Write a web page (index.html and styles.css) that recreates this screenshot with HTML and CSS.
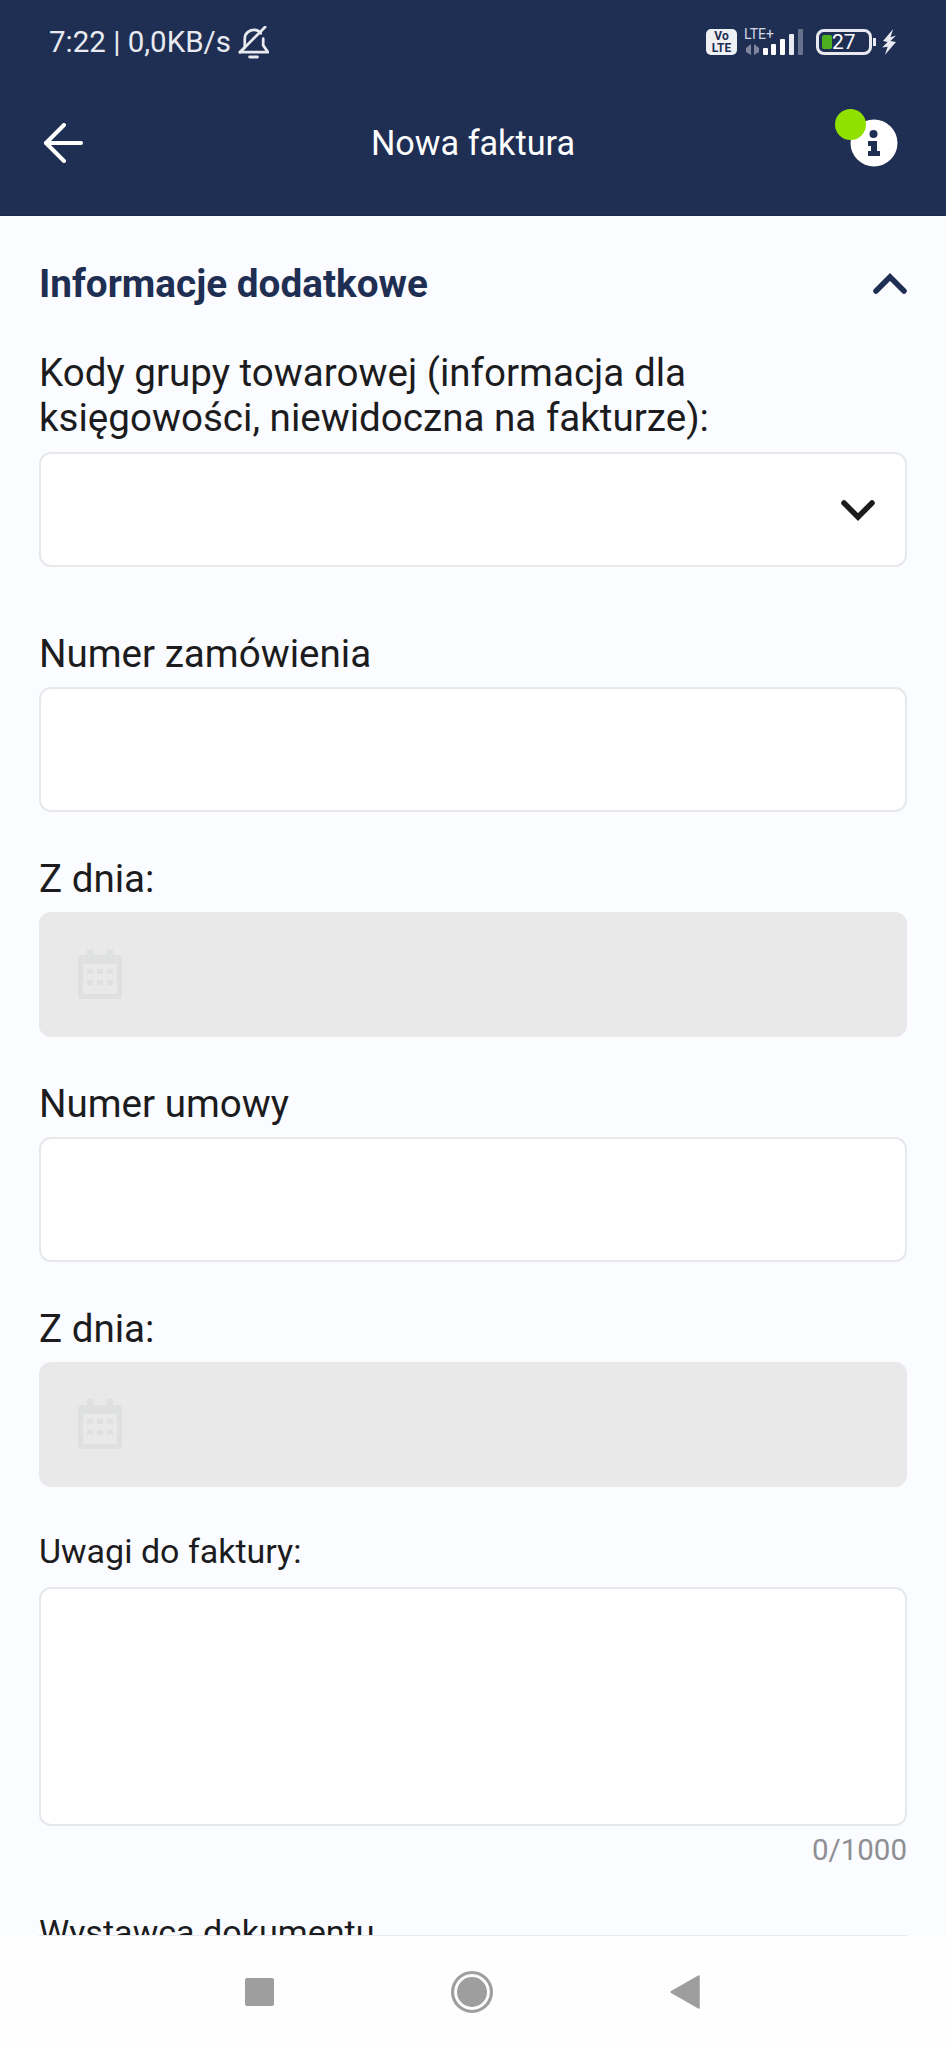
FILE: index.html
```html
<!DOCTYPE html>
<html lang="pl">
<head>
<meta charset="utf-8" />
<link rel="stylesheet" href="styles.css">
</head>

<body>
    <div class="screen">
        <header class="top">
            <div class="status">
                <div class="status-left">
                    <span>7:22 | 0,0KB/s</span>
                    <svg class="bell" viewBox="0 0 32 34" width="31" height="33" fill="none" stroke="#e8eaf0" stroke-width="2.800" stroke-linejoin="round" stroke-linecap="round">
                        <path d="M7 22 V13 C7 7 12 4 17 4 C20 4 22 5.500 23.500 7.500"/>
                        <path d="M26 13 V20 L31 27 H2 L7 22"/>
                        <path d="M2 27 L28 1"/>
                        <path d="M12 32 H20" stroke-width="3"/>
                    </svg>
                </div>
                <div class="status-right">
                    <div class="volte"><span>Vo</span><span>LTE</span></div>
                    <div class="signal">
                        <span class="lte">LTE+</span>
                        <svg viewBox="0 0 60 28" width="60" height="28" fill="#fff">
                            <path d="M2 20 L7 16 V27 L2 24 Z M10 16 L15 20 V24 L10 27 Z" fill="#7d869c"/>
                            <rect x="19" y="20" width="5" height="7" rx="1"/>
                            <rect x="27" y="16" width="5" height="11" rx="1"/>
                            <rect x="36" y="11" width="5" height="16" rx="1"/>
                            <rect x="45" y="6" width="5" height="21" rx="1" fill="#e8eaf0"/>
                            <rect x="54" y="1" width="5" height="26" rx="1" fill="#69728c"/>
                        </svg>
                    </div>
                    <div class="battery">
                        <div class="battery-body">
                            <span class="battery-fill"></span>
                            <span class="battery-num">27</span>
                        </div>
                        <span class="battery-tip"></span>
                    </div>
                    <svg class="bolt" viewBox="0 0 16 28" width="15" height="26" fill="#e8eaf0">
                        <path d="M12 0 L1 13 L6 14 L0 20 L6 19 L3 28 L15 14 L9 13 L15 7 L9 9 Z"/>
                    </svg>
                </div>
            </div>
            <div class="appbar">
                <svg class="back" viewBox="0 0 40 40" width="40" height="40" fill="none" stroke="#fff" stroke-width="4" stroke-linecap="round" stroke-linejoin="round">
                    <path d="M38 20 H3"/>
                    <path d="M21 2 L3 20 L21 38"/>
                </svg>
                <div class="title">Nowa faktura</div>
                <div class="info">
                    <svg viewBox="0 0 48 48" width="48" height="48">
                        <circle cx="24" cy="24" r="23.500" fill="#fff"/>
                        <circle cx="23.500" cy="15" r="4" fill="#1f2e53"/>
                        <path d="M18 22 H27 V32 H30 V37 H18 V32 H21 V27 H18 Z" fill="#1f2e53"/>
                    </svg>
                    <span class="dot"></span>
                </div>
            </div>
        </header>

        <main class="content">
            <div class="section-head">
                <h2>Informacje dodatkowe</h2>
                <svg viewBox="0 0 34 22" width="34" height="22" fill="none" stroke="#1f2e53" stroke-width="5.500" stroke-linecap="round">
                    <path d="M3 19 L17 5 L31 19"/>
                </svg>
            </div>

            <label class="lbl">Kody grupy towarowej (informacja dla<br>księgowości, niewidoczna na fakturze):</label>
            <div class="box select">
                <svg viewBox="0 0 34 22" width="34" height="22" fill="none" stroke="#1c1c1e" stroke-width="5.500" stroke-linecap="round">
                    <path d="M3 4 L17 18 L31 4"/>
                </svg>
            </div>

            <label class="lbl after-select">Numer zamówienia</label>
            <div class="box"></div>

            <label class="lbl">Z dnia:</label>
            <div class="box off">
                <svg viewBox="0 0 44 50" width="44" height="50" fill="#dfe1e1">
                    <path d="M9 0 H15 V6 H29 V0 H35 V6 H40 Q44 6 44 10 V46 Q44 50 40 50 H4 Q0 50 0 46 V10 Q0 6 4 6 H9 Z"/>
                    <rect x="5" y="15" width="34" height="30" fill="#e9e9e9"/>
                    <path d="M9 20 H15 V25 H9 Z M19 20 H25 V25 H19 Z M29 20 H35 V25 H29 Z M9 31 H15 V36 H9 Z M19 31 H25 V36 H19 Z M29 31 H35 V36 H29 Z"/>
                </svg>
            </div>

            <label class="lbl">Numer umowy</label>
            <div class="box"></div>

            <label class="lbl">Z dnia:</label>
            <div class="box off">
                <svg viewBox="0 0 44 50" width="44" height="50" fill="#dfe1e1">
                    <path d="M9 0 H15 V6 H29 V0 H35 V6 H40 Q44 6 44 10 V46 Q44 50 40 50 H4 Q0 50 0 46 V10 Q0 6 4 6 H9 Z"/>
                    <rect x="5" y="15" width="34" height="30" fill="#e9e9e9"/>
                    <path d="M9 20 H15 V25 H9 Z M19 20 H25 V25 H19 Z M29 20 H35 V25 H29 Z M9 31 H15 V36 H9 Z M19 31 H25 V36 H19 Z M29 31 H35 V36 H29 Z"/>
                </svg>
            </div>

            <label class="lbl small">Uwagi do faktury:</label>
            <div class="box area"></div>
            <div class="counter">0/1000</div>

            <label class="lbl wystawca">Wystawca dokumentu</label>
        </main>

        <nav class="navbar">
            <span class="nav-square"></span>
            <span class="nav-circle"></span>
            <svg viewBox="0 0 30 34" width="30" height="34" fill="#9e9e9e">
                <path d="M29 1 V33 L1 17 Z" stroke="#9e9e9e" stroke-width="1.500" stroke-linejoin="round"/>
            </svg>
        </nav>
    </div>
</body>
</html>
```

FILE: styles.css
```css
* {
    box-sizing: border-box;
}
html, body {
    margin: 0px;
    height: 100%;
}
body {
    font-family: Roboto, "Liberation Sans", sans-serif;
    background: #fafcff;
    color: #1c1c1e;
}
.screen {
    width: 946px;
    height: 2049px;
    display: flex;
    flex-direction: column;
    overflow: hidden;
}

/* top area */
.top {
    height: 216px;
    flex: none;
    background: #1f2e53;
    color: #fff;
    border-bottom: 1px solid #1b2849;
}
.status {
    height: 84px;
    padding: 0 49px;
    display: flex;
    justify-content: space-between;
    align-items: center;
    color: #e8eaf0;
    font-size: 29.500px;
}
.status-left {
    display: flex;
    align-items: center;
    gap: 7px;
}
.status-right {
    display: flex;
    align-items: center;
}
.volte {
    width: 31px;
    height: 26px;
    border-radius: 5px;
    background: #eef0f4;
    color: #1f2e53;
    font-size: 12px;
    font-weight: 700;
    line-height: 12px;
    display: flex;
    flex-direction: column;
    align-items: center;
    justify-content: center;
}
.signal {
    margin-left: 7px;
    width: 60px;
    height: 28px;
    position: relative;
}
.lte {
    position: absolute;
    top: -2px;
    left: 0px;
    font-size: 14px;
    line-height: 16px;
    color: #d5d9e2;
}
.signal svg {
    display: block;
}
.battery {
    margin-left: 12px;
    display: flex;
    align-items: center;
}
.battery-body {
    width: 56px;
    height: 26px;
    border: 3px solid #e8eaf0;
    border-radius: 8px;
    padding: 3px;
    position: relative;
}
.battery-fill {
    display: block;
    width: 10px;
    height: 100%;
    background: #4caf1e;
    border-radius: 2px;
}
.battery-num {
    position: absolute;
    top: 0px;
    left: 13px;
    font-size: 21px;
    line-height: 20px;
    color: #fff;
}
.battery-tip {
    width: 3px;
    height: 8px;
    margin-left: 1px;
    background: #e8eaf0;
}
.bolt {
    margin-left: 6px;
}
.appbar {
    height: 131px;
    padding: 0 48px 13px 43px;
    display: flex;
    align-items: center;
    justify-content: space-between;
}
.title {
    margin-left: 13px;
    font-size: 34.200px;
    color: #fff;
}
.info {
    position: relative;
    width: 48px;
    height: 48px;
}
.info svg {
    display: block;
}
.dot {
    position: absolute;
    top: -10px;
    left: -15px;
    width: 31px;
    height: 31px;
    border-radius: 50%;
    background: #90e000;
}

/* form */
.content {
    flex: 1;
    min-height: 0;
    overflow: hidden;
    padding: 39px 39px 0;
}
.section-head {
    height: 56px;
    margin-bottom: 39px;
    display: flex;
    align-items: center;
    justify-content: space-between;
}
.section-head h2 {
    margin: 0px;
    font-size: 38.700px;
    font-weight: 700;
    color: #1f2e53;
}
.lbl {
    display: block;
    margin-top: 44.500px;
    margin-bottom: 11px;
    font-size: 38.600px;
    line-height: 45px;
}
.section-head + .lbl {
    margin-top: 0px;
    margin-bottom: 12px;
}
.lbl.after-select {
    margin-top: 64px;
}
.lbl.small {
    font-size: 34px;
    margin-top: 42.500px;
    margin-bottom: 13px;
}
.box {
    height: 124.500px;
    background: #fff;
    border: 2px solid #e6e8eb;
    border-radius: 12px;
}
.box.select {
    height: 115px;
    padding-right: 30px;
    display: flex;
    align-items: center;
    justify-content: flex-end;
}
.box.off {
    background: #e9e9e9;
    border-color: #e9e9e9;
    padding-left: 37px;
    display: flex;
    align-items: center;
}
.box.area {
    height: 239px;
}
.counter {
    margin-top: 6px;
    text-align: right;
    font-size: 29.500px;
    line-height: 36px;
    color: #8e8e93;
}
.lbl.wystawca {
    margin-top: 42px;
    margin-bottom: 0px;
    font-size: 34.100px;
}

/* android nav */
.navbar {
    height: 114px;
    flex: none;
    background: #fefefe;
    position: relative;
    padding-left: 245px;
    display: flex;
    align-items: center;
    gap: 177px;
}
.navbar::before {
    content: "";
    position: absolute;
    top: 0px;
    left: 39px;
    right: 39px;
    height: 1px;
    background: #e6e8ec;
}
.nav-square {
    width: 29px;
    height: 28px;
    border-radius: 2px;
    background: #9e9e9e;
}
.nav-circle {
    width: 42px;
    height: 42px;
    border-radius: 50%;
    background: #9e9e9e;
    border: 3px solid #9e9e9e;
    box-shadow: inset 0 0 0 3px #fefefe;
}
```
